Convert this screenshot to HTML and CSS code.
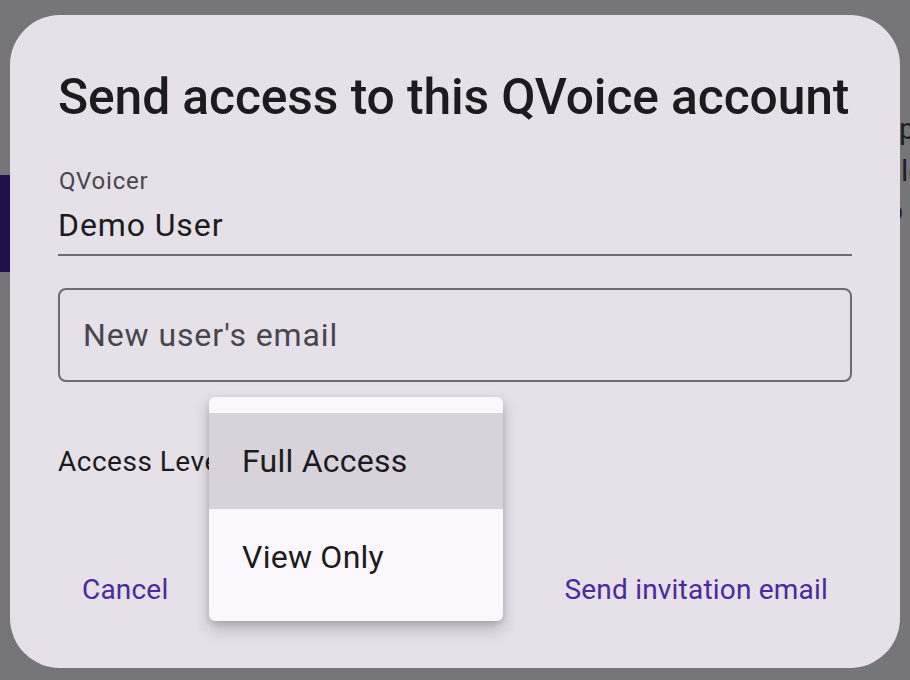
FILE: index.html
```html
<!DOCTYPE html>
<html lang="en">
<head>
<meta charset="utf-8">
<title>Send access</title>
<link rel="stylesheet" href="styles.css">
</head>
<body>
<div class="underlay">
  <div class="under-bar"></div>
  <span class="under-text t1">p</span>
  <span class="under-text t2">le</span>
  <span class="under-text t3">o</span>
</div>
<div class="dialog">
  <h1 class="title">Send access to this QVoice account</h1>
  <div class="readonly-field">
    <div class="field-label">QVoicer</div>
    <div class="field-value">Demo User</div>
  </div>
  <div class="outlined-field">
    <span class="hint">New user's email</span>
  </div>
  <div class="access-row">
    <span class="access-label">Access Level</span>
  </div>
  <div class="actions">
    <span class="text-button">Cancel</span>
    <span class="text-button">Send invitation email</span>
  </div>
  <div class="menu">
    <div class="menu-item selected">Full Access</div>
    <div class="menu-item">View Only</div>
  </div>
</div>
</body>
</html>
```

FILE: styles.css
```css
html, body {
  margin: 0;
  padding: 0;
}
body {
  width: 910px;
  height: 680px;
  overflow: hidden;
  background: #767579;
  font-family: Roboto, "Liberation Sans", sans-serif;
  position: relative;
  padding-top: 15px;
  box-sizing: border-box;
}
.underlay {
  position: absolute;
  inset: 0;
}
.under-bar {
  position: absolute;
  left: 0;
  top: 175px;
  width: 10px;
  height: 97px;
  background: #21114a;
}
.under-text {
  position: absolute;
  font-size: 30px;
  line-height: 30px;
  color: #1f1e22;
}
.t1 { left: 899px; top: 114px; }
.t2 { left: 901px; top: 156px; }
.t3 { left: 886px; top: 196px; }

.dialog {
  position: relative;
  margin: 0 10px;
  height: 653px;
  box-sizing: border-box;
  border-radius: 50px;
  background: #e6e0e9;
  padding: 54px 48px 0 48px;
  display: flex;
  flex-direction: column;
}
.title {
  margin: 0;
  font-size: 49.75px;
  line-height: 56px;
  font-weight: 500;
  color: #1d1b20;
  white-space: nowrap;
  letter-spacing: -0.1px;
}
.readonly-field {
  margin-top: 40px;
  border-bottom: 2px solid #6f6a74;
  padding-bottom: 9px;
}
.field-label {
  padding-left: 1px;
  font-size: 24px;
  line-height: 32px;
  color: #49454f;
  letter-spacing: 0.8px;
}
.field-value {
  margin-top: 8px;
  font-size: 32px;
  line-height: 40px;
  color: #1d1b20;
  letter-spacing: 0.9px;
}
.outlined-field {
  margin-top: 32px;
  height: 94px;
  box-sizing: border-box;
  border: 2px solid #6f6a74;
  border-radius: 8px;
  padding: 0 23px;
  display: flex;
  align-items: center;
}
.hint {
  font-size: 32px;
  line-height: 40px;
  color: #49454f;
  letter-spacing: 0.9px;
}
.access-row {
  margin-top: 60px;
  height: 40px;
  display: flex;
  align-items: center;
}
.access-label {
  font-size: 28px;
  line-height: 40px;
  color: #1d1b20;
  letter-spacing: 0.5px;
}
.actions {
  margin-top: 88px;
  display: flex;
  justify-content: space-between;
}
.text-button {
  padding: 0 24px;
  font-size: 28px;
  line-height: 40px;
  color: #4a2a9c;
  letter-spacing: 0.2px;
}
.menu {
  position: absolute;
  left: 199px;
  top: 382px;
  width: 294px;
  height: 224px;
  box-sizing: border-box;
  padding: 16px 0;
  background: #fcf7fc;
  border-radius: 6px;
  box-shadow: 0 8px 16px rgba(0, 0, 0, 0.2), 0 2px 6px rgba(0, 0, 0, 0.14);
}
.menu-item {
  height: 96px;
  line-height: 96px;
  padding-left: 33px;
  font-size: 32px;
  color: #1d1b20;
  letter-spacing: 0.25px;
}
.menu-item.selected {
  background: #d8d2da;
}
```
